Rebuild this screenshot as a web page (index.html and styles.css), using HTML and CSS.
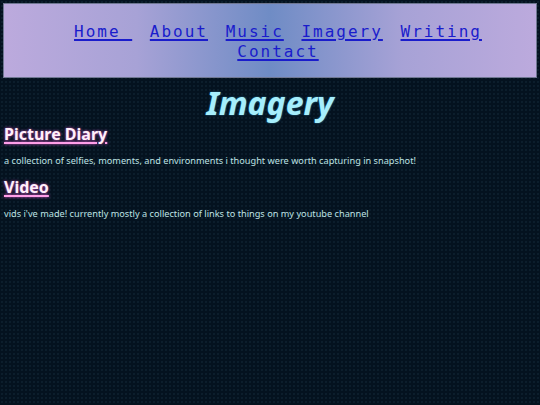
FILE: index.html
```html
<!DOCTYPE html>
<html>
<head>
<meta charset="utf-8">
<link rel="stylesheet" href="styles.css">
</head>
<body>
<header class="topbar">
  <nav class="nav">
    <a href="#">Home </a>
    <a href="#">About</a>
    <a href="#">Music</a>
    <a href="#">Imagery</a>
    <a href="#">Writing</a>
    <a href="#">Contact</a>
  </nav>
</header>
<main class="content">
  <h1 class="title">Imagery</h1>
  <h2 class="section"><a href="#">Picture Diary</a></h2>
  <p class="desc">a collection of selfies, moments, and environments i thought were worth capturing in snapshot!</p>
  <h2 class="section"><a href="#">Video</a></h2>
  <p class="desc">vids i've made! currently mostly a collection of links to things on my youtube channel</p>
</main>
</body>
</html>
```
FILE: styles.css
```css
html, body {
  margin: 0;
  padding: 0;
}
body {
  background-color: #04121f;
  background-image: radial-gradient(rgba(40,70,90,0.22) 1px, transparent 1px);
  background-size: 4px 4px;
  padding: 3px;
  height: 405px;
  box-sizing: border-box;
  overflow: hidden;
  font-family: "Noto Sans", sans-serif;
}
.topbar {
  height: 75px;
  box-sizing: border-box;
  border: 1px solid #6f7791;
  background: linear-gradient(90deg, #bcaadd 0%, #a7a2d6 25%, #6f8cc5 50%, #a7a2d6 75%, #bcaadd 100%);
  display: flex;
  justify-content: center;
  padding: 18px 30px 0 46px;
}
.nav {
  text-align: center;
  font-family: "DejaVu Sans Mono", monospace;
  font-size: 16px;
  line-height: 20px;
  letter-spacing: 2px;
  word-spacing: 0;
}
.nav a {
  color: #1a1ccc;
  text-decoration: underline;
  text-decoration-thickness: 2px;
  text-underline-offset: 2px;
  margin: 0 3px;
  white-space: pre;
}
.content {
  padding: 0 1px;
}
.title {
  margin: 5px 0 0 0;
  text-align: center;
  font-style: italic;
  font-weight: bold;
  font-size: 32px;
  line-height: 40px;
  color: #a6eefc;
  text-shadow: 0 0 2px #2a7fa8;
}
.section {
  margin: 0;
  font-size: 16px;
  line-height: 22px;
  font-weight: bold;
}
.section a {
  color: #fff0fa;
  text-decoration: underline;
  text-decoration-color: #ff9ee8;
  text-decoration-thickness: 2px;
  text-underline-offset: 2px;
  text-shadow: 0 0 3px #d050c0;
}
.desc {
  margin: 9px 0 8px 0;
  font-size: 9.2px;
  line-height: 14px;
  color: #bfe2e4;
}
```
